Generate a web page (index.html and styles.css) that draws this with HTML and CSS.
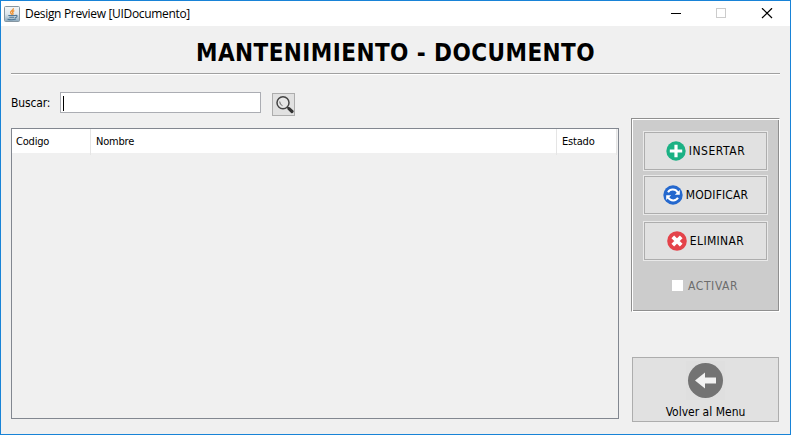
FILE: index.html
```html
<!DOCTYPE html>
<html lang="es">
<head>
<meta charset="utf-8">
<title>Design Preview [UIDocumento]</title>
<link rel="stylesheet" href="styles.css">
</head>
<body>
<div class="window">
  <header class="titlebar">
    <svg class="java" width="16" height="16" viewBox="0 0 16 16">
      <defs><linearGradient id="jg" x1="0" y1="0" x2="0" y2="1"><stop offset="0" stop-color="#f4f6f7"/><stop offset=".5" stop-color="#dfe7ec"/><stop offset="1" stop-color="#8aa8bd"/></linearGradient></defs>
      <rect x=".5" y=".5" width="15" height="15" rx="1" fill="url(#jg)" stroke="#8696a1"/>
      <path d="M9.3 2.2C10 4 6 5 6.6 6.7 7 7.600 7.700 8 7.700 8.800M10.300 4.700C8.200 5.600 8.300 6.500 9 7.300 9.200 8 8.800 8.300 8.600 8.700" fill="none" stroke="#ed8f2d" stroke-width="1.300"/>
      <path d="M4.300 9.500H11M5.300 11.300H10.200M3.500 13.200Q8 14.300 12 13M11 9.500Q13.500 9 13 10.300 12.600 11.500 11 11.700" fill="none" stroke="#4f7898" stroke-width="1.100"/>
    </svg>
    <span class="caption">Design Preview [UIDocumento]</span>
    <svg class="controls" width="103" height="11" viewBox="0 0 103 11">
      <path d="M0 5.500H10" stroke="#000"/>
      <rect x="45.500" y=".5" width="9" height="9" fill="none" stroke="#ccc"/>
      <path d="M91 .2L101 10M101 .2L91 10" stroke="#000" stroke-width="1.200"/>
    </svg>
  </header>
  <h1 class="heading"><span>MANTENIMIENTO - DOCUMENTO</span></h1>
  <main class="content">
    <section class="records">
      <div class="search">
        <label class="label">Buscar:</label>
        <div class="field"><i class="caret"></i></div>
        <button class="find">
          <svg width="21" height="21" viewBox="0 0 21 21"><circle cx="10" cy="8.700" r="6" fill="#e7e7e7" stroke="#444" stroke-width="1.500"/><path d="M6.700 7.500Q6.700 10.800 9.500 11.700" fill="none" stroke="#666"/><path d="M14.300 13L16 14.500" stroke="#444" stroke-width="1.500"/><path d="M16 14.700L19 17.500" stroke="#333" stroke-width="3.200" stroke-linecap="round"/></svg>
        </button>
      </div>
      <div class="table">
        <div class="row"><span class="cell">Codigo</span><span class="cell">Nombre</span><span class="cell">Estado</span></div>
      </div>
    </section>
    <aside class="side">
      <div class="panel">
        <button class="action insert">
          <svg width="20" height="20" viewBox="0 0 20 20"><circle cx="10" cy="10" r="9.700" fill="#1bb184"/><path d="M10 3.800V16.200M3.800 10H16.200" stroke="#fff" stroke-width="3.200"/></svg>
          <span>INSERTAR</span>
        </button>
        <button class="action modify">
          <svg width="20" height="20" viewBox="0 0 20 20"><circle cx="10" cy="10" r="9.700" fill="#2468ce"/><path d="M5 7.200C7 3.800 12.500 3.600 14.800 7.500M15 12.800C13 16.200 7.500 16.400 5.200 12.500" fill="none" stroke="#fff" stroke-width="2"/><path d="M16.800 5V9.800H11.800zM3.200 15V10.200H8.200z" fill="#fff"/></svg>
          <span>MODIFICAR</span>
        </button>
        <button class="action delete">
          <svg width="20" height="20" viewBox="0 0 20 20"><circle cx="10" cy="10" r="9.800" fill="#e4434a"/><path d="M5.800 5.800L14.200 14.200M14.200 5.800L5.800 14.200" stroke="#fff" stroke-width="3.800"/></svg>
          <span>ELIMINAR</span>
        </button>
        <div class="check"><i class="box"></i><span>ACTIVAR</span></div>
      </div>
      <button class="back">
        <svg width="39" height="39" viewBox="0 0 39 39"><rect width="39" height="39" fill="#dfdfdf"/><circle cx="19.500" cy="19.500" r="17.500" fill="#737373"/><path d="M9 19.500L19 11.500V16.500H30V22.500H19V27.500z" fill="#f2f2f2"/></svg>
        <span>Volver al Menu</span>
      </button>
    </aside>
  </main>
</div>
</body>
</html>
```

FILE: styles.css
```css
* { box-sizing: border-box; }
body { margin: 0; font: 12px/16px "DejaVu Sans Condensed", "DejaVu Sans", sans-serif; font-stretch: condensed; color: #000; }
button { margin: 0; padding: 0; font: inherit; color: inherit; background: #e1e1e1; border: 1px solid #adadad; border-radius: 0; }
svg { display: block; flex: none; }
span, label { white-space: nowrap; }
.window { width: 791px; height: 435px; border: 1px solid #1883d7; background: #f0f0f0; overflow: hidden; }
.titlebar { height: 25px; padding: 0 16px 0 3px; display: flex; align-items: center; background: #fff; }
.caption { margin-left: 5px; flex: 1; font: 12px/16px "Open Sans", sans-serif; letter-spacing: -.32px; }
.heading { height: 49px; margin: 0 10px; padding-top: 12px; border-bottom: 1px solid #fff; box-shadow: inset 0 -1px #a0a0a0; text-align: center; font-size: 24px; line-height: 30px; letter-spacing: .43px; }
.content { display: grid; grid-template-columns: 608px 149px; column-gap: 12px; padding-left: 10px; }
.search { display: flex; height: 53px; padding-top: 17px; }
.label { width: 49px; padding-top: 3px; letter-spacing: -.15px; }
.field { width: 201px; height: 21px; padding: 3px 2px; background: #fff; border: 1px solid #abadb3; }
.caret { display: block; width: 1px; height: 15px; background: #000; }
.find { width: 23px; height: 23px; margin: 1px 0 0 11px; }
.table { height: 291px; border: 1px solid #828790; }
.row { display: grid; grid-template-columns: 79px 466px 60px; height: 24px; margin-right: 1px; background: #fff; font-size: 11px; line-height: 26px; letter-spacing: -.2px; }
.cell { padding-left: 4px; border-right: 1px solid #e5e5e5; }
.cell + .cell { padding-left: 5px; }
.side { padding-top: 43px; }
.panel { width: 149px; height: 194px; padding: 12px 11px 12px 12px; background: #ccc; border: 1px solid #8f8f8f; border-right-color: #fff; border-bottom-color: #fff; box-shadow: inset 1px 1px #fff, inset -1px -1px #8f8f8f; }
.action { display: flex; align-items: center; justify-content: center; gap: 3px; width: 123px; height: 38px; margin: 1px 0 6px; outline: 1px solid #e9e9e9; }
.insert { letter-spacing: .55px; }
.modify { letter-spacing: .15px; }
.delete { margin-top: 8px; letter-spacing: .35px; }
.check { display: flex; align-items: center; gap: 5px; height: 15px; margin: 18px 0 0 28px; color: #6d6d6d; letter-spacing: .6px; }
.box { width: 11px; height: 11px; background: #fff; }
.back { display: flex; flex-direction: column; align-items: center; width: 147px; height: 65px; margin: 45px 0 0 1px; padding-top: 3px; }
.back span { margin-top: 4px; }
```
